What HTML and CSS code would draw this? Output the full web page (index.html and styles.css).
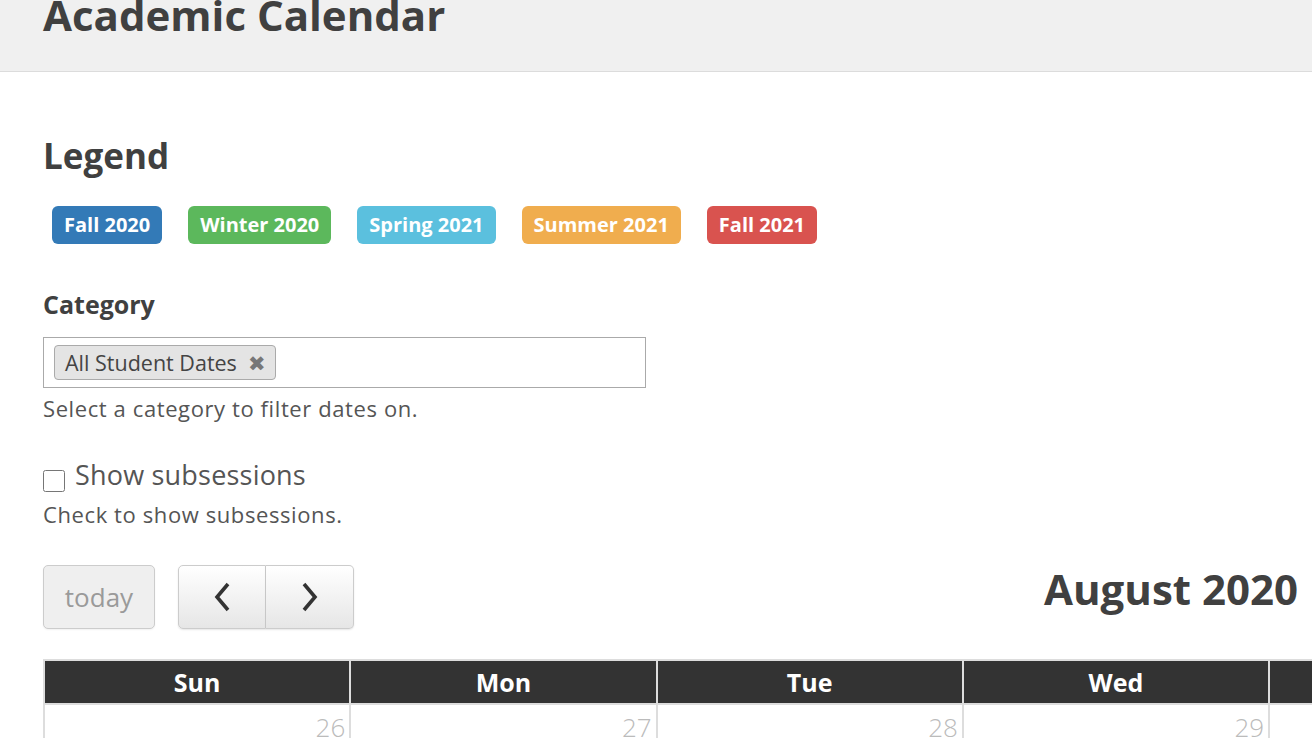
FILE: index.html
```html
<!DOCTYPE html>
<html lang="en">
<head>
  <meta charset="UTF-8" />
  <title>Academic Calendar</title>
  <link rel="stylesheet" href="styles.css">
</head>
<body>
  <div class="page-header">
    <h1>Academic Calendar</h1>
  </div>

  <div class="content">
    <h2>Legend</h2>
    <div class="legend">
      <span class="badge fall20">Fall 2020</span>
      <span class="badge winter20">Winter 2020</span>
      <span class="badge spring21">Spring 2021</span>
      <span class="badge summer21">Summer 2021</span>
      <span class="badge fall21">Fall 2021</span>
    </div>

    <label class="field-label">Category</label>
    <div class="select-box">
      <span class="chip">All Student Dates <span class="chip-x">&#x2716;</span></span>
    </div>
    <div class="help">Select a category to filter dates on.</div>

    <label class="check">
      <input type="checkbox" />
      <span>Show subsessions</span>
    </label>
    <div class="help">Check to show subsessions.</div>

    <div class="toolbar">
      <button class="btn today">today</button>
      <div class="btn-group">
        <button class="btn nav">
          <svg width="18" height="30" viewBox="0 0 18 30"><path d="M15 2 L4 15 L15 28" fill="none" stroke="#333" stroke-width="3.6"/></svg>
        </button>
        <button class="btn nav">
          <svg width="18" height="30" viewBox="0 0 18 30"><path d="M3 2 L14 15 L3 28" fill="none" stroke="#333" stroke-width="3.6"/></svg>
        </button>
      </div>
      <h2 class="month">August 2020</h2>
    </div>

    <table class="calendar">
      <thead>
        <tr>
          <th>Sun</th><th>Mon</th><th>Tue</th><th>Wed</th><th>Thu</th><th>Fri</th><th>Sat</th>
        </tr>
      </thead>
      <tbody>
        <tr>
          <td>26</td><td>27</td><td>28</td><td>29</td><td>30</td><td>31</td><td>1</td>
        </tr>
      </tbody>
    </table>
  </div>
</body>
</html>
```

FILE: styles.css
```css
body {
  margin: 0;
  font-family: "Open Sans", sans-serif;
  color: #333;
  background: #fff;
  overflow: hidden;
}

.page-header {
  display: flow-root;
  background-color: #f0f0f0;
  border-bottom: 1px solid #dcdcdc;
  padding: 0 43px 32px;
  height: 39px;
}

.page-header h1 {
  margin: -9px 0 0;
  font-size: 42px;
  line-height: 48px;
  font-weight: 700;
  color: #404040;
}

.content {
  padding: 0 43px;
}

h2 {
  margin: 62px 0 28px;
  font-size: 35px;
  line-height: 44px;
  font-weight: 700;
  color: #404040;
}

.legend {
  display: flex;
  gap: 26px;
  padding-left: 9px;
}

.badge {
  display: inline-block;
  padding: 0 12px;
  height: 38px;
  line-height: 38px;
  border-radius: 6px;
  color: white;
  font-weight: 700;
  font-size: 20px;
}

.fall20 { background-color: #337ab7; }
.winter20 { background-color: #5cb85c; }
.spring21 { background-color: #5bc0de; }
.summer21 { background-color: #f0ad4e; }
.fall21 { background-color: #d9534f; }

.field-label {
  display: block;
  margin-top: 44px;
  font-size: 25px;
  font-weight: 700;
  line-height: 32px;
  color: #404040;
}

.select-box {
  margin-top: 17px;
  width: 591px;
  height: 49px;
  border: 1px solid #aaa;
  display: flex;
  align-items: center;
  padding-left: 10px;
}

.chip {
  display: inline-flex;
  align-items: center;
  gap: 11px;
  height: 33px;
  padding: 0 9px 0 10px;
  background-color: #e4e4e4;
  border: 1px solid #aaa;
  border-radius: 4px;
  font-size: 21.5px;
  color: #444;
}

.chip-x {
  color: #777;
  font-size: 21px;
}

.help {
  margin-top: 6px;
  font-size: 22px;
  line-height: 28px;
  letter-spacing: 0.6px;
  color: #555;
}

.check {
  display: flex;
  align-items: flex-start;
  gap: 10px;
  margin-top: 36px;
  font-size: 27px;
  line-height: 34px;
  letter-spacing: 0.2px;
  color: #555;
}

.check input {
  margin: 12px 0 0;
  width: 22px;
  height: 22px;
}

.check + .help {
  margin-top: 8px;
}

.toolbar {
  display: flex;
  align-items: center;
  margin-top: 37px;
  width: 1255px;
}

.btn {
  height: 64px;
  border: 1px solid #ccc;
  border-radius: 5px;
  background: linear-gradient(#fff, #e6e6e6);
  font-family: "Open Sans", sans-serif;
  box-shadow: 0 1px 2px rgba(0, 0, 0, 0.1);
  cursor: pointer;
}

.btn.today {
  width: 112px;
  background: #efefef;
  color: #9a9a9a;
  font-size: 26px;
  box-shadow: 0 1px 2px rgba(0, 0, 0, 0.06);
}

.btn-group {
  display: flex;
  margin-left: 23px;
}

.btn.nav {
  width: 88px;
  display: flex;
  align-items: center;
  justify-content: center;
}

.btn-group .btn:first-child {
  border-top-right-radius: 0;
  border-bottom-right-radius: 0;
}

.btn-group .btn:last-child {
  border-left: none;
  border-top-left-radius: 0;
  border-bottom-left-radius: 0;
}

.month {
  margin: 0 0 16px auto;
  font-size: 42px;
}

.calendar {
  margin-top: 30px;
  border-collapse: collapse;
  table-layout: fixed;
  width: 2146px;
}

.calendar th {
  background-color: #333;
  color: white;
  font-size: 25px;
  font-weight: 700;
  height: 42px;
  padding: 0;
  border: 2px solid #ddd;
}

.calendar td {
  height: 120px;
  vertical-align: top;
  text-align: right;
  padding: 4px 4px 0 0;
  border: 2px solid #ddd;
  color: #bbb;
  font-size: 26px;
  font-weight: 300;
}
```
